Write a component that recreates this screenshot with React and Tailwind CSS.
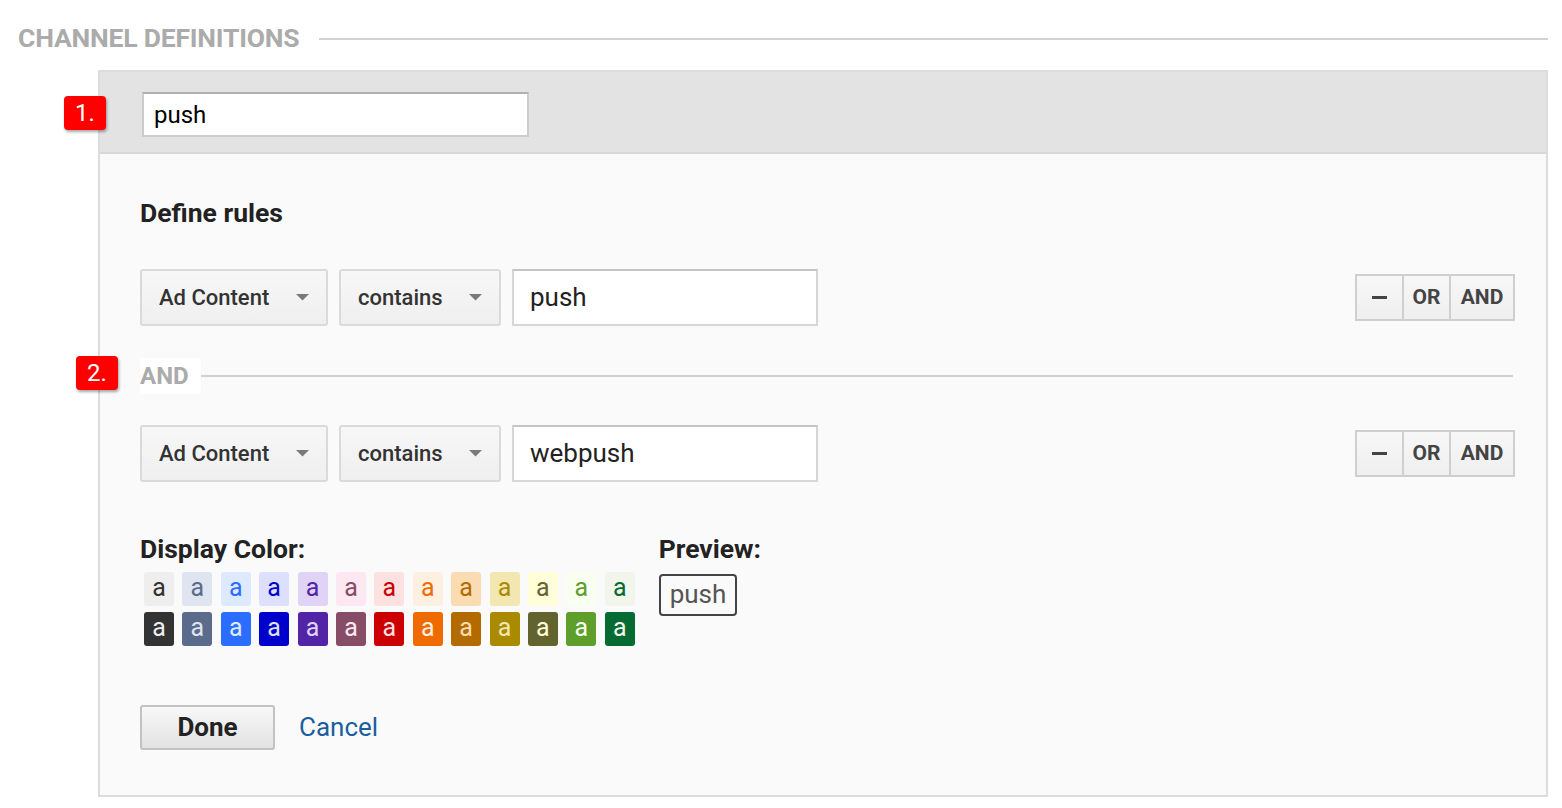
import React from "react";

const swatches = [
    ["#eeeeee", "#333333"],
    ["#dfe4f1", "#5a6b8b"],
    ["#dde9ff", "#2a6dff"],
    ["#dde0fc", "#0000cc"],
    ["#e0d3f6", "#5224a6"],
    ["#fde8f2", "#874d66"],
    ["#fde1e1", "#cc0000"],
    ["#fdf0e1", "#ef6b00"],
    ["#fadcb3", "#b36b00"],
    ["#f2e6b1", "#aa8a00"],
    ["#fffed9", "#636330"],
    ["#f8fff0", "#5e9e2a"],
    ["#f1f5ec", "#056b33"],
];

const Badge = ({ label, className }) => (
    <div
        className={
            "absolute flex items-center justify-center w-[42px] h-[34px] rounded-[4px] bg-[#ff0000] text-white text-[24px] leading-none shadow-[1px_2px_3px_rgba(0,0,0,0.35)] " +
            className
        }
    >
        {label}
    </div>
);

const Select = ({ label, width }) => (
    <div
        className={
            "flex items-center justify-between h-[57px] pl-[17px] pr-[17px] rounded-[3px] border-2 border-[#dadada] bg-gradient-to-b from-[#f7f7f7] to-[#efefef] text-[22px] font-medium text-[#333] " +
            width
        }
    >
        <span>{label}</span>
        <svg width="13" height="7" viewBox="0 0 13 7">
            <path d="M0 0 H13 L6.5 6.5 Z" fill="#7a7a7a" />
        </svg>
    </div>
);

const RuleButtons = () => (
    <div className="flex h-[47px] border-2 border-[#cfcfcf] bg-gradient-to-b from-[#f7f7f7] to-[#efefef] text-[21px] font-bold text-[#444]">
        <div className="flex items-center justify-center w-[47px] border-r-2 border-[#cfcfcf]">
            <div className="w-[15px] h-[3px] bg-[#444]" />
        </div>
        <div className="flex items-center justify-center w-[47px] border-r-2 border-[#cfcfcf]">OR</div>
        <div className="flex items-center justify-center w-[62px]">AND</div>
    </div>
);

const RuleRow = ({ value }) => (
    <div className="flex items-start">
        <Select label="Ad Content" width="w-[188px]" />
        <div className="w-[11px]" />
        <Select label="contains" width="w-[162px]" />
        <div className="w-[11px]" />
        <div className="flex items-center w-[306px] h-[57px] pl-[16px] border-2 border-[#d6d6d6] border-t-[#c4c4c4] bg-white text-[26px] text-[#222]">
            {value}
        </div>
        <div className="flex-1" />
        <div className="pt-[5px]">
            <RuleButtons />
        </div>
    </div>
);

export default function App() {
    return (
        <div className="w-[1562px] h-[808px] bg-white font-['Roboto',sans-serif] overflow-hidden">
            <div className="flex items-center pl-[18px] pr-[14px] pt-[25px] h-[52px]">
                <span className="text-[26.5px] font-bold text-[#ababab] leading-none tracking-[-0.2px]">
                    CHANNEL DEFINITIONS
                </span>
                <div className="flex-1 h-[2px] bg-[#d2d2d2] ml-[20px]" />
            </div>

            <div className="relative ml-[98px] mr-[14px] mt-[18px] border-2 border-[#dcdcdc] bg-[#fafafa]">
                <div className="flex items-start h-[82px] pl-[42px] pt-[20px] bg-[#e3e3e3] border-b-2 border-[#d8d8d8]">
                    <div className="flex items-center w-[387px] h-[45px] pl-[10px] border-2 border-[#cccccc] border-t-[#b0b0b0] bg-white text-[24px] text-black">
                        push
                    </div>
                </div>
                <Badge label="1." className="left-[-36px] top-[24px]" />

                <div className="pl-[40px] pr-[31px] pb-[45px]">
                    <div className="mt-[45px] h-[28px] leading-[28px] text-[26.5px] font-bold text-[#222]">
                        Define rules
                    </div>
                    <div className="mt-[42px]">
                        <RuleRow value="push" />
                    </div>

                    <div className="flex items-center h-[34px] mt-[33px]">
                        <span className="bg-white pr-[12px] text-[24px] font-bold text-[#ababab]">AND</span>
                        <div className="flex-1 h-[2px] bg-[#d0d0d0] mr-[2px]" />
                    </div>

                    <div className="mt-[32px]">
                        <RuleRow value="webpush" />
                    </div>

                    <div className="flex mt-[53px]">
                        <div>
                            <div className="h-[28px] leading-[28px] text-[26.5px] font-bold text-[#222]">Display Color:</div>
                            <div className="mt-[9px] pl-[4px] grid grid-cols-[repeat(13,30px)] gap-x-[8.4px] gap-y-[6px]">
                                {swatches.map(([bg, fg], i) => (
                                    <div
                                        key={"l" + i}
                                        className="flex items-center justify-center w-[30px] h-[34px] rounded-[3px] text-[25px] leading-none pb-[3px]"
                                        style={{ backgroundColor: bg, color: fg }}
                                    >
                                        a
                                    </div>
                                ))}
                                {swatches.map(([bg, fg], i) => (
                                    <div
                                        key={"d" + i}
                                        className="flex items-center justify-center w-[30px] h-[34px] rounded-[3px] text-[25px] leading-none pb-[3px]"
                                        style={{ backgroundColor: fg, color: bg }}
                                    >
                                        a
                                    </div>
                                ))}
                            </div>
                        </div>
                        <div className="ml-[24px]">
                            <div className="h-[28px] leading-[28px] text-[26.5px] font-bold text-[#222]">Preview:</div>
                            <div className="mt-[11px] inline-flex items-center h-[42px] px-[9px] pb-[2px] rounded-[4px] border-2 border-[#444] text-[26px] text-[#555]">
                                push
                            </div>
                        </div>
                    </div>

                    <div className="flex items-center mt-[59px]">
                        <div className="flex items-center justify-center w-[135px] h-[45px] rounded-[3px] border-2 border-[#c2c2c2] bg-gradient-to-b from-[#f8f8f8] to-[#e2e2e2] text-[26px] font-bold text-[#222]">
                            Done
                        </div>
                        <span className="ml-[24px] text-[26px] text-[#1b5e9e]">Cancel</span>
                    </div>
                </div>
                <Badge label="2." className="left-[-24px] top-[284px]" />
            </div>
        </div>
    );
}
